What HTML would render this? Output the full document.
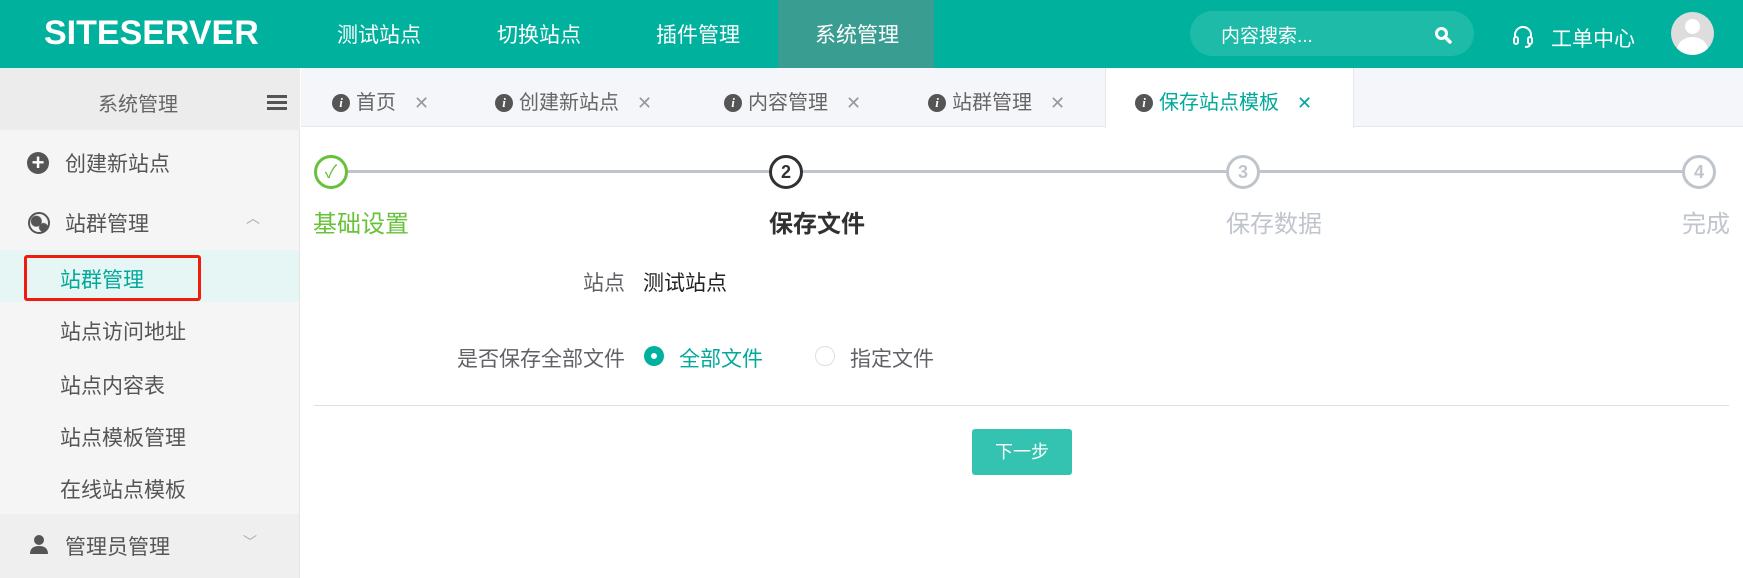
<!DOCTYPE html>
<html><head><meta charset="utf-8"><style>
*{margin:0;padding:0;box-sizing:border-box}
body{width:1743px;height:578px;overflow:hidden;background:#fff;font-family:"Liberation Sans","Noto Sans CJK SC",sans-serif;position:relative;color:#606266}
.a{position:absolute;white-space:nowrap}
.hdr{left:0;top:0;width:1743px;height:68px;background:#00b19d}
.nav{top:19px;font-size:21px;color:#fff}
.side{left:0;top:68px;width:300px;height:510px;background:#f5f5f5;border-right:1px solid #e4e4e4}
.si{font-size:21px;color:#555}
.tab{top:86px;font-size:20px;color:#666}
.ic{display:inline-block;width:18px;height:18px;border-radius:50%;background:#555;color:#fff;font:italic bold 13px "Liberation Serif",serif;text-align:center;line-height:18px;vertical-align:2px;margin-right:6px}
.x{color:#999;margin-left:18px;font-size:18px}
.circ{width:34px;height:34px;border-radius:50%;border:3px solid #c0c4cc;text-align:center;line-height:28px;font-weight:bold;font-size:18px;color:#c0c4cc;background:#fff}
.lbl{top:204px;font-size:24px}
.f{font-size:21px}
</style></head><body>
<div class="a hdr"></div>
<div class="a" style="left:44px;top:14px;font-size:34px;font-weight:bold;color:#fff;letter-spacing:0px">SITESERVER</div>
<div class="a nav" style="left:337px">测试站点</div>
<div class="a nav" style="left:497px">切换站点</div>
<div class="a nav" style="left:656px">插件管理</div>
<div class="a" style="left:778px;top:0;width:156px;height:68px;background:#3a9d92"></div>
<div class="a nav" style="left:815px">系统管理</div>
<div class="a" style="left:1190px;top:11px;width:284px;height:45px;border-radius:23px;background:#1dbba8"></div>
<div class="a" style="left:1221px;top:21px;font-size:19px;color:#fff">内容搜索...</div>
<svg class="a" style="left:1434px;top:26px" width="18" height="18" viewBox="0 0 18 18"><circle cx="7.5" cy="7.5" r="5" stroke="#fff" stroke-width="3" fill="none"/><line x1="11" y1="11" x2="16" y2="16" stroke="#fff" stroke-width="3.5" stroke-linecap="round"/></svg>
<svg class="a" style="left:1512px;top:25px" width="22" height="24" viewBox="0 0 22 24"><path d="M3 13V10a8 8 0 0 1 16 0v3" stroke="#fff" stroke-width="2" fill="none"/><rect x="2" y="12" width="4" height="7" rx="2" fill="none" stroke="#fff" stroke-width="2"/><rect x="16" y="12" width="4" height="7" rx="2" fill="none" stroke="#fff" stroke-width="2"/><path d="M18 19q0 3-5 3" stroke="#fff" stroke-width="2" fill="none"/></svg>
<div class="a" style="left:1551px;top:23px;font-size:21px;color:#fff">工单中心</div>
<div class="a" style="left:1671px;top:12px;width:43px;height:43px;border-radius:50%;background:#ddd;overflow:hidden"><div style="position:absolute;left:14px;top:7px;width:15px;height:15px;border-radius:50%;background:#fff"></div><div style="position:absolute;left:6px;top:25px;width:31px;height:26px;border-radius:50%;background:#fff"></div></div>

<div class="a side"></div>
<div class="a" style="left:0;top:68px;width:300px;height:62px;background:#ececec"></div>
<div class="a" style="left:98px;top:88px;font-size:20px;color:#666">系统管理</div>
<div class="a" style="left:267px;top:95px;width:20px;height:3px;background:#555;box-shadow:0 6px 0 #555,0 12px 0 #555"></div>
<div class="a" style="left:27px;top:152px;width:22px;height:22px;border-radius:50%;background:#555;color:#fff;font-size:22px;line-height:21px;text-align:center;font-weight:bold">+</div>
<div class="a si" style="left:65px;top:148px">创建新站点</div>
<div class="a" style="left:28px;top:212px;width:22px;height:22px;border-radius:50%;border:2px solid #555;background:radial-gradient(circle at 35% 40%,#555 5px,transparent 6px),radial-gradient(circle at 75% 75%,#555 4px,transparent 5px)"></div>
<div class="a si" style="left:65px;top:208px">站群管理</div>
<div class="a" style="left:246px;top:208px;font-size:14px;color:#aaa">︿</div>
<div class="a" style="left:0;top:250px;width:299px;height:52px;background:#e6f6f4"></div>
<div class="a" style="left:24px;top:255px;width:177px;height:46px;border:3px solid #f21c0e;border-radius:3px"></div>
<div class="a si" style="left:60px;top:264px;color:#00a99a">站群管理</div>
<div class="a si" style="left:60px;top:316px">站点访问地址</div>
<div class="a si" style="left:60px;top:370px">站点内容表</div>
<div class="a si" style="left:60px;top:422px">站点模板管理</div>
<div class="a si" style="left:60px;top:474px">在线站点模板</div>
<div class="a" style="left:0;top:514px;width:299px;height:64px;background:#efefef"></div>
<svg class="a" style="left:29px;top:534px" width="20" height="20" viewBox="0 0 20 20"><circle cx="10" cy="6" r="5" fill="#555"/><path d="M1 20q0-8 9-8t9 8z" fill="#555"/></svg>
<div class="a si" style="left:65px;top:531px">管理员管理</div>
<div class="a" style="left:243px;top:532px;font-size:14px;color:#aaa">﹀</div>

<div class="a" style="left:301px;top:68px;width:1442px;height:59px;background:#f5f6fa;border-bottom:1px solid #e4e7ed"></div>
<div class="a tab" style="left:332px"><span class="ic">i</span>首页<span class="x">✕</span></div>
<div class="a tab" style="left:495px"><span class="ic">i</span>创建新站点<span class="x">✕</span></div>
<div class="a tab" style="left:724px"><span class="ic">i</span>内容管理<span class="x">✕</span></div>
<div class="a tab" style="left:928px"><span class="ic">i</span>站群管理<span class="x">✕</span></div>
<div class="a" style="left:1105px;top:68px;width:249px;height:60px;background:#fff;border-left:1px solid #e4e7ed;border-right:1px solid #e4e7ed"></div>
<div class="a tab" style="left:1135px;color:#00a99a"><span class="ic">i</span>保存站点模板<span class="x" style="color:#00a99a">✕</span></div>

<div class="a" style="left:331px;top:170px;width:1368px;height:3px;background:#c0c4cc"></div>
<div class="a circ" style="left:314px;top:155px;border-color:#67c23a;color:#67c23a;font-weight:normal">✓</div>
<div class="a circ" style="left:769px;top:155px;border-color:#303133;color:#303133">2</div>
<div class="a circ" style="left:1226px;top:155px">3</div>
<div class="a circ" style="left:1682px;top:155px">4</div>
<div class="a lbl" style="left:313px;color:#67c23a">基础设置</div>
<div class="a lbl" style="left:769px;color:#303133;font-weight:bold">保存文件</div>
<div class="a lbl" style="left:1226px;color:#c0c4cc">保存数据</div>
<div class="a lbl" style="left:1682px;color:#c0c4cc">完成</div>

<div class="a f" style="left:583px;top:267px">站点</div>
<div class="a f" style="left:643px;top:267px;color:#222">测试站点</div>
<div class="a f" style="left:457px;top:343px">是否保存全部文件</div>
<div class="a" style="left:644px;top:346px;width:20px;height:20px;border-radius:50%;background:#00b19d"><div style="position:absolute;left:7px;top:7px;width:6px;height:6px;border-radius:50%;background:#fff"></div></div>
<div class="a f" style="left:679px;top:343px;color:#00a99a">全部文件</div>
<div class="a" style="left:815px;top:346px;width:20px;height:20px;border-radius:50%;border:1px solid #dcdfe6"></div>
<div class="a f" style="left:850px;top:343px">指定文件</div>
<div class="a" style="left:314px;top:405px;width:1415px;height:1px;background:#dcdfe6"></div>
<div class="a" style="left:972px;top:429px;width:100px;height:46px;border-radius:3px;background:#33c3b0;color:#fff;font-size:18px;text-align:center;line-height:46px">下一步</div>
</body></html>
